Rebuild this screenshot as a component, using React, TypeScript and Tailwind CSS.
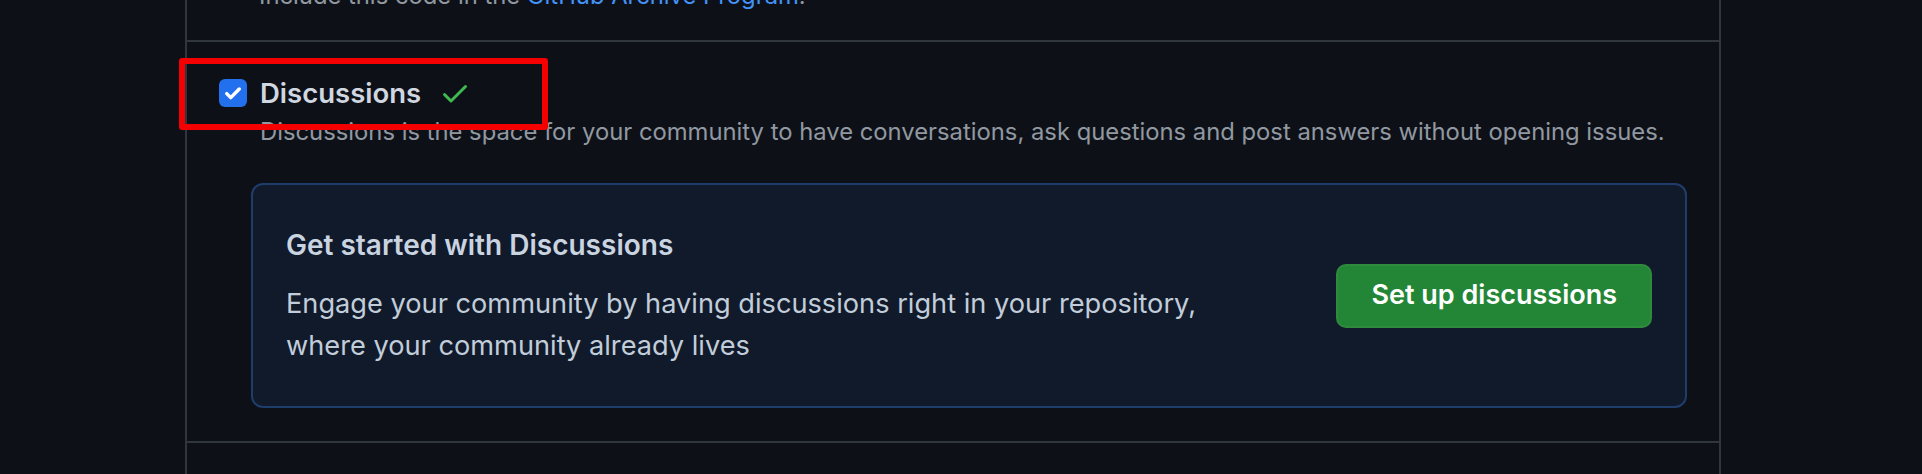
import React from 'react';

const CheckIcon: React.FC<{ className?: string }> = ({ className }) => (
  <svg viewBox="0 0 16 16" className={className} fill="currentColor" aria-hidden="true">
    <path d="M13.78 4.22a.75.75 0 0 1 0 1.06l-7.25 7.25a.75.75 0 0 1-1.06 0L2.22 9.28a.751.751 0 0 1 .018-1.042.751.751 0 0 1 1.042-.018L6 10.94l6.72-6.72a.75.75 0 0 1 1.06 0Z" />
  </svg>
);

const App: React.FC = () => {
  return (
    <div className="min-h-screen bg-[#0d1117] overflow-hidden font-[Inter,_'Noto_Sans',_sans-serif]">
      <div className="ml-[185px] w-[1536px] h-[474px] border-x-2 border-[#30363d]">
        {/* Previous setting (only the tail is visible) */}
        <div className="flex flex-col h-[42px] pl-[72px] border-b-2 border-[#30363d]">
          <p className="-mt-[22px] text-[23.8px] leading-[36px] text-[#9198a1]">
            Include this code in the <a className="text-[#4493f8]">GitHub Archive Program</a>.
          </p>
        </div>

        {/* Discussions */}
        <div className="relative px-[32px] pt-[30px] pb-[33px] border-b-2 border-[#30363d]">
          <div className="flex items-center">
            <span className="flex items-center justify-center w-[28px] h-[28px] rounded-[6px] bg-[#2270ee]">
              <svg viewBox="0 0 16 16" className="w-[20px] h-[20px] text-white" fill="none" stroke="currentColor" strokeWidth="2.8" strokeLinecap="round" strokeLinejoin="round">
                <path d="M3 8.5l3.2 3.2L13 4.8" />
              </svg>
            </span>
            <h3 className="ml-[13px] text-[27.5px] leading-[42px] font-semibold text-[#d1d7e0]">Discussions</h3>
            <CheckIcon className="ml-[18px] w-[32px] h-[32px] text-[#3fb950]" />
          </div>
          <p className="pl-[41px] text-[23.8px] leading-[36px] text-[#9198a1]">
            Discussions is the space for your community to have conversations, ask questions and post answers without opening issues.
          </p>

          <div className="mt-[33px] ml-[32px] flex items-center justify-between rounded-[12px] border-2 border-[#1f3d6b] bg-[#111a2b] px-[33px] py-[39px]">
            <div>
              <h4 className="text-[28px] leading-[42px] font-semibold text-[#c9d4e0]">Get started with Discussions</h4>
              <p className="mt-[17px] max-w-[960px] text-[27.2px] leading-[42px] text-[#c2cdda]">
                Engage your community by having discussions right in your repository, where your community already lives
              </p>
            </div>
            <button className="h-[64px] px-[33px] rounded-[10px] border-2 border-[#2e8b3e] bg-[#238636] text-[27px] font-semibold text-white">
              Set up discussions
            </button>
          </div>

          {/* annotation highlight */}
          <div className="absolute left-[-8px] top-[16px] w-[369px] h-[72px] border-[6px] border-[#f40000] rounded-[3px] pointer-events-none" />
        </div>
      </div>
    </div>
  );
};

export default App;
